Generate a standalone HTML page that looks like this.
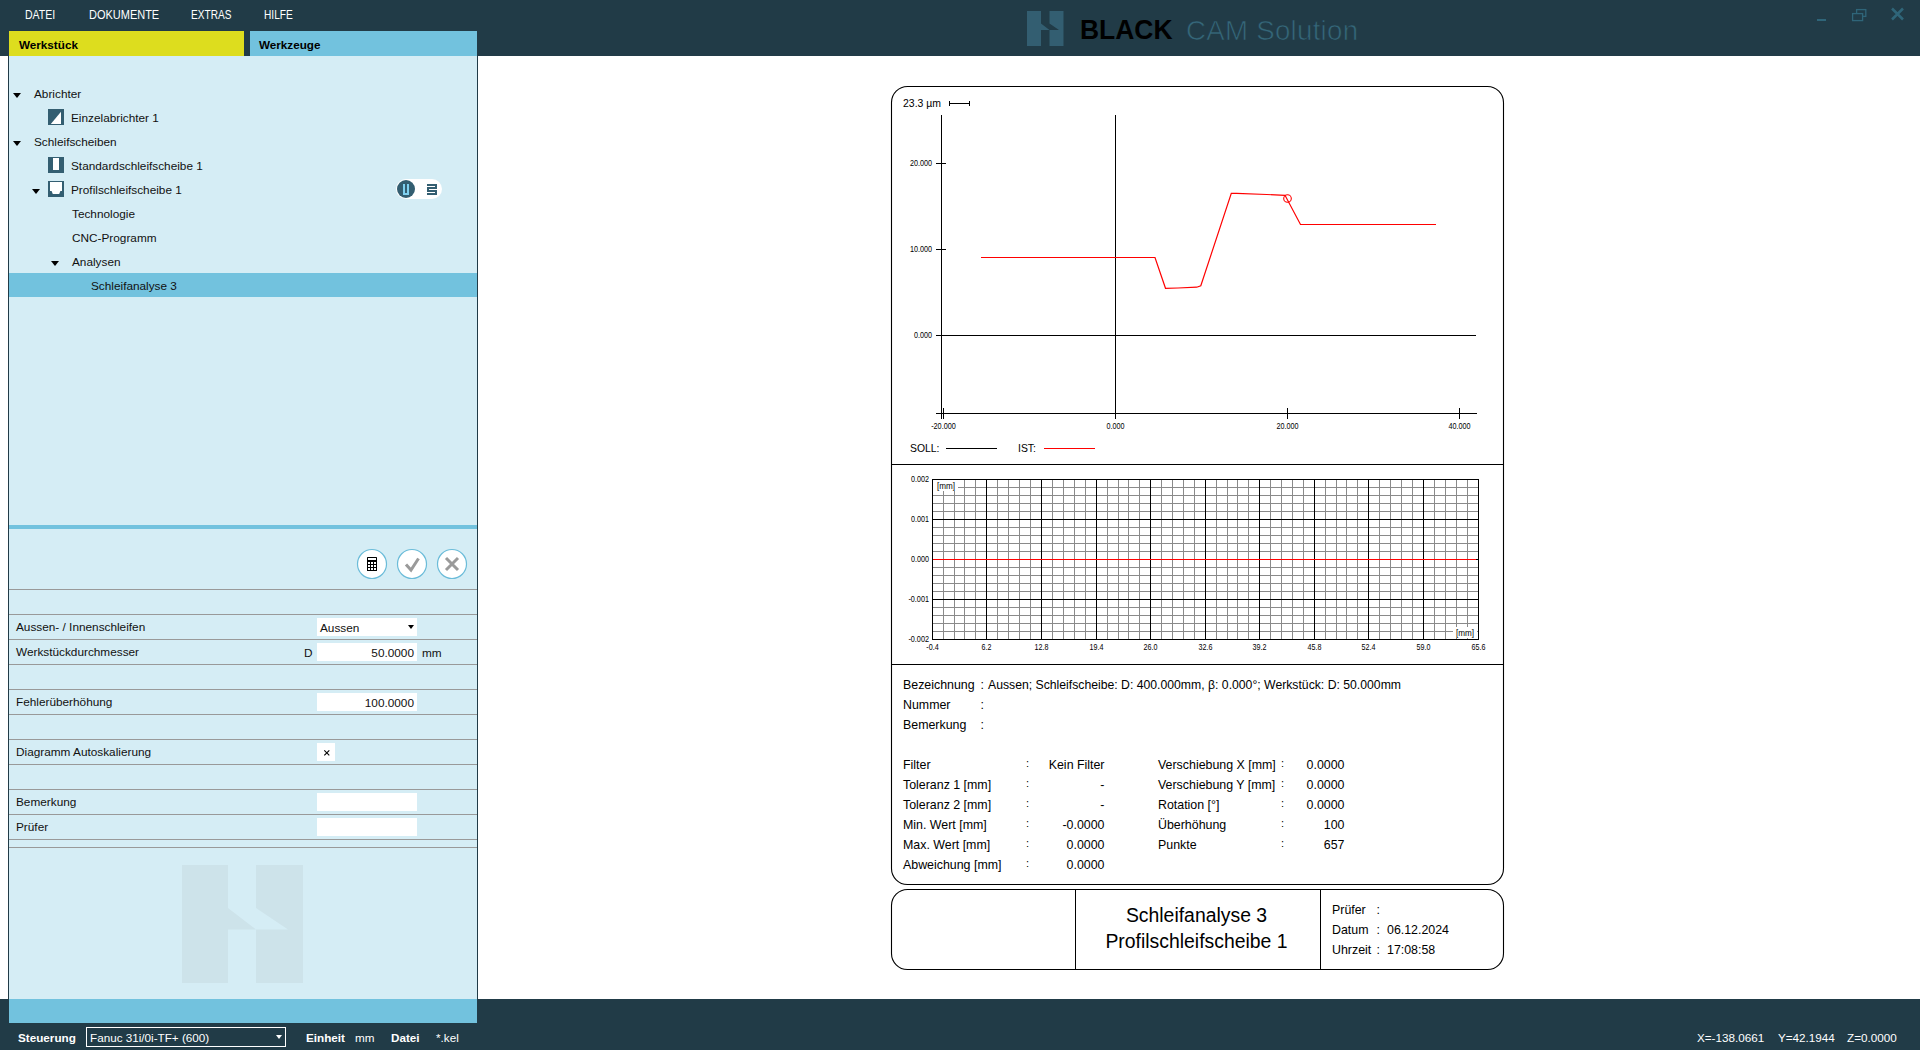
<!DOCTYPE html>
<html>
<head>
<meta charset="utf-8">
<style>
html,body{margin:0;padding:0;}
body{width:1920px;height:1050px;overflow:hidden;position:relative;background:#fff;font-family:"Liberation Sans",sans-serif;color:#000;}
.a{position:absolute;white-space:nowrap;}
.menu{top:8px;font-size:12px;color:#fff;line-height:14px;transform-origin:0 0;}
.tab{top:31px;height:25px;font-size:11.7px;font-weight:bold;line-height:27px;}
.tr{font-size:11.8px;line-height:14px;color:#111;}
.tri{width:0;height:0;border-left:4px solid transparent;border-right:4px solid transparent;border-top:5px solid #000;}
.hl{height:1px;background:#999999;left:9px;width:468px;}
.lbl{font-size:11.8px;line-height:14px;color:#111;left:16px;}
.fld{background:#fff;height:18px;width:100px;left:317px;font-size:11.8px;line-height:20px;text-align:right;box-sizing:border-box;padding-right:3px;color:#111;}
.st{font-size:11.7px;color:#fff;line-height:14px;top:1031px;}
</style>
</head>
<body>
<div class="a" style="left:0;top:0;width:1920px;height:56px;background:#213b47"></div>
<svg class="a" style="left:24px;top:5px" width="34.2" height="20"><text x="1" y="14.2" font-family="Liberation Sans" font-size="12.2" fill="#fff" textLength="30.2" lengthAdjust="spacingAndGlyphs">DATEI</text></svg>
<svg class="a" style="left:87.6px;top:5px" width="74.2" height="20"><text x="1" y="14.2" font-family="Liberation Sans" font-size="12.2" fill="#fff" textLength="70.2" lengthAdjust="spacingAndGlyphs">DOKUMENTE</text></svg>
<svg class="a" style="left:190.4px;top:5px" width="44.4" height="20"><text x="1" y="14.2" font-family="Liberation Sans" font-size="12.2" fill="#fff" textLength="40.4" lengthAdjust="spacingAndGlyphs">EXTRAS</text></svg>
<svg class="a" style="left:263.2px;top:5px" width="32.8" height="20"><text x="1" y="14.2" font-family="Liberation Sans" font-size="12.2" fill="#fff" textLength="28.8" lengthAdjust="spacingAndGlyphs">HILFE</text></svg>
<svg class="a" style="left:1027px;top:11px" width="37" height="35" viewBox="0 0 37 35"><path d="M0 0H14V12.5L22.5 19H14V35H0Z M22.5 0H36.5V35H22.5V19H32L22.5 12.5Z" fill="#335e71"/></svg>
<svg class="a" style="left:1078px;top:10px" width="100" height="36"><text x="2" y="29.4" font-family="Liberation Sans" font-weight="bold" font-size="27.5" textLength="92.5" lengthAdjust="spacingAndGlyphs">BLACK</text></svg>
<div class="a" style="left:1186px;top:15px;font-size:27.7px;line-height:32px;color:#35677a;-webkit-text-stroke:0.7px #213b47;letter-spacing:0.25px">CAM Solution</div>
<svg class="a" style="left:1800px;top:0px" width="120" height="30">
<rect x="17" y="19" width="9" height="2" fill="#2f6579"/>
<rect x="56.6" y="9.6" width="9.2" height="6.8" fill="none" stroke="#2f6579" stroke-width="1.3"/>
<rect x="52.6" y="13.6" width="10" height="7" fill="#213b47" stroke="#2f6579" stroke-width="1.3"/>
<path d="M92 8.5L103 19.5M103 8.5L92 19.5" stroke="#2f6579" stroke-width="2.5"/>
</svg>
<div class="a tab" style="left:9px;width:235px;background:#dddd1e;"><span style="margin-left:10px">Werkstück</span></div>
<div class="a tab" style="left:250px;width:227px;background:#72c2de;"><span style="margin-left:9px">Werkzeuge</span></div>
<div class="a" style="left:8px;top:56px;width:468px;height:943px;background:#d5edf5;border-left:1px solid #213b47;border-right:1px solid #213b47;"></div>
<div class="a" style="left:9px;top:273px;width:468px;height:24px;background:#72c2de"></div>
<div class="a tr" style="left:34px;top:87px">Abrichter</div>
<div class="a tr" style="left:71px;top:111px">Einzelabrichter 1</div>
<div class="a tr" style="left:34px;top:135px">Schleifscheiben</div>
<div class="a tr" style="left:71px;top:159px">Standardschleifscheibe 1</div>
<div class="a tr" style="left:71px;top:183px">Profilschleifscheibe 1</div>
<div class="a tr" style="left:72px;top:207px">Technologie</div>
<div class="a tr" style="left:72px;top:231px">CNC-Programm</div>
<div class="a tr" style="left:72px;top:255px">Analysen</div>
<div class="a tr" style="left:91px;top:279px">Schleifanalyse 3</div>
<div class="a tri" style="left:13px;top:93px"></div>
<div class="a tri" style="left:13px;top:141px"></div>
<div class="a tri" style="left:32px;top:189px"></div>
<div class="a tri" style="left:51px;top:261px"></div>
<svg class="a" style="left:48px;top:109px" width="16" height="16"><rect width="16" height="16" fill="#335e71"/><path d="M2.8 15L13 2.8V15Z" fill="#fff"/></svg>
<svg class="a" style="left:48px;top:157px" width="16" height="16"><rect width="16" height="16" fill="#335e71"/><rect x="5" y="1" width="6" height="12" fill="#fff"/></svg>
<svg class="a" style="left:48px;top:181px" width="16" height="16"><rect width="16" height="16" fill="#335e71"/><path d="M2 1H14V10H12.4L11.2 13H4.8L3.6 10H2Z" fill="#fff"/></svg>
<svg class="a" style="left:396px;top:179px" width="46" height="20"><rect x="0" y="0" width="46" height="20" rx="10" fill="#fff"/><circle cx="10" cy="10" r="9" fill="#335e71"/><path d="M7 5H9V14H11V5H13V16H7Z" fill="#7fd0ef"/><path d="M31 5h10v2h-10zM39 7h2v1h-2zM31 8h10v2h-10zM31 10h2v1h-2zM31 11h10v2h-10zM39 13h2v1h-2zM31 14h10v2h-10z" fill="#335e71"/></svg>
<div class="a" style="left:9px;top:525px;width:468px;height:4px;background:#72c2de"></div>
<svg class="a" style="left:350px;top:542px" width="120" height="44">
<circle cx="22" cy="22" r="14.5" fill="#fff" stroke="#6bbcd9" stroke-width="1.2"/>
<circle cx="62" cy="22" r="14.5" fill="#fff" stroke="#6bbcd9" stroke-width="1.2"/>
<circle cx="102" cy="22" r="14.5" fill="#fff" stroke="#6bbcd9" stroke-width="1.2"/>
<rect x="17" y="15" width="10" height="14" rx="0.6" fill="#000"/>
<rect x="18" y="16" width="8" height="2" fill="#fff"/><rect x="18" y="20" width="2" height="2" fill="#fff"/><rect x="18" y="23" width="2" height="2" fill="#fff"/><rect x="18" y="26" width="2" height="2" fill="#fff"/><rect x="21" y="20" width="2" height="2" fill="#fff"/><rect x="21" y="23" width="2" height="2" fill="#fff"/><rect x="21" y="26" width="2" height="2" fill="#fff"/><rect x="24" y="20" width="2" height="2" fill="#fff"/><rect x="24" y="23" width="2" height="2" fill="#fff"/><rect x="24" y="26" width="2" height="2" fill="#fff"/>
<path d="M56 22.5L61 28L68.5 16.5" fill="none" stroke="#9a9a9a" stroke-width="3"/>
<path d="M96 16L108 28M108 16L96 28" fill="none" stroke="#9a9a9a" stroke-width="3"/>
</svg>
<div class="a hl" style="top:589px"></div>
<div class="a hl" style="top:614px"></div>
<div class="a hl" style="top:639px"></div>
<div class="a hl" style="top:664px"></div>
<div class="a hl" style="top:689px"></div>
<div class="a hl" style="top:714px"></div>
<div class="a hl" style="top:739px"></div>
<div class="a hl" style="top:764px"></div>
<div class="a hl" style="top:789px"></div>
<div class="a hl" style="top:814px"></div>
<div class="a hl" style="top:839px"></div>
<div class="a hl" style="top:847px"></div>
<div class="a lbl" style="top:620px">Aussen- / Innenschleifen</div>
<div class="a lbl" style="top:645px">Werkstückdurchmesser</div>
<div class="a lbl" style="top:695px">Fehlerüberhöhung</div>
<div class="a lbl" style="top:745px">Diagramm Autoskalierung</div>
<div class="a lbl" style="top:795px">Bemerkung</div>
<div class="a lbl" style="top:820px">Prüfer</div>
<div class="a fld" style="top:618px;text-align:left;padding-left:3px">Aussen</div>
<div class="a tri" style="left:408px;top:625px;border-left-width:3.5px;border-right-width:3.5px;border-top-width:4px"></div>
<div class="a fld" style="top:643px">50.0000</div>
<div class="a lbl" style="left:304px;top:646px">D</div>
<div class="a lbl" style="left:422px;top:646px">mm</div>
<div class="a fld" style="top:693px">100.0000</div>
<svg class="a" style="left:317px;top:743px" width="18" height="18"><rect width="18" height="18" fill="#fff"/><path d="M7.3 7.3L12.3 12.3M12.3 7.3L7.3 12.3" stroke="#000" stroke-width="1.1"/></svg>
<div class="a fld" style="top:793px"></div>
<div class="a fld" style="top:818px"></div>
<svg class="a" style="left:182px;top:865px" width="121" height="118"><path d="M0 0H46V43L74 64.5H46V118H0Z M74 0H121V118H74V64.5H106L74 43Z" fill="#cde3ea"/></svg>
<svg class="a" style="left:0;top:0" width="1920" height="1050" viewBox="0 0 1920 1050">
<rect x="891.5" y="86.5" width="612" height="798" rx="16" fill="none" stroke="#000" stroke-width="1.1"/>
<path d="M891.5 464.5H1503.5M891.5 664.5H1503.5" stroke="#000" stroke-width="1" shape-rendering="crispEdges"/>
<text x="903" y="107" font-family="Liberation Sans" font-size="10.6" textLength="38" lengthAdjust="spacingAndGlyphs">23.3 µm</text>
<path d="M949.5 103.5H969.5M949.5 101V106M969.5 101V106" stroke="#000" stroke-width="1" shape-rendering="crispEdges"/>
<path d="M941.5 115V419M1115.5 115V419M936 413.5H1477M936 335.5H1476M936 163.5H946M936 249.5H946M943.5 408V419M1287.5 408V419M1459.5 408V419" stroke="#000" stroke-width="1" shape-rendering="crispEdges" fill="none"/>
<text x="932" y="166.0" font-family="Liberation Sans" font-size="8.4" text-anchor="end" textLength="22.1" lengthAdjust="spacingAndGlyphs">20.000</text>
<text x="932" y="252.0" font-family="Liberation Sans" font-size="8.4" text-anchor="end" textLength="22.1" lengthAdjust="spacingAndGlyphs">10.000</text>
<text x="932" y="338.0" font-family="Liberation Sans" font-size="8.4" text-anchor="end" textLength="18.0" lengthAdjust="spacingAndGlyphs">0.000</text>
<text x="943.5" y="429" font-family="Liberation Sans" font-size="8.4" text-anchor="middle" textLength="24.7" lengthAdjust="spacingAndGlyphs">-20.000</text>
<text x="1115.5" y="429" font-family="Liberation Sans" font-size="8.4" text-anchor="middle" textLength="18.0" lengthAdjust="spacingAndGlyphs">0.000</text>
<text x="1287.5" y="429" font-family="Liberation Sans" font-size="8.4" text-anchor="middle" textLength="22.1" lengthAdjust="spacingAndGlyphs">20.000</text>
<text x="1459.5" y="429" font-family="Liberation Sans" font-size="8.4" text-anchor="middle" textLength="22.1" lengthAdjust="spacingAndGlyphs">40.000</text>
<text x="910" y="452" font-family="Liberation Sans" font-size="10.4">SOLL:</text>
<path d="M946 448.5H997" stroke="#000" stroke-width="1" shape-rendering="crispEdges"/>
<text x="1018" y="452" font-family="Liberation Sans" font-size="10.4">IST:</text>
<path d="M1044 448.5H1095" stroke="#f00" stroke-width="1" shape-rendering="crispEdges"/>
<polyline points="981,257.5 1155,257.5 1165.5,288.3 1178,288 1196.7,287.2 1200.8,285.8 1231.3,193.3 1236.7,193.3 1266.7,194.5 1285,195.3 1300.5,224.5 1436,224.5" fill="none" stroke="#f00" stroke-width="1.2"/>
<circle cx="1287.5" cy="198.5" r="3.8" fill="none" stroke="#f00" stroke-width="1.1"/>
<path d="M943.5 479V639M954.5 479V639M964.5 479V639M975.5 479V639M997.5 479V639M1008.5 479V639M1019.5 479V639M1030.5 479V639M1052.5 479V639M1063.5 479V639M1074.5 479V639M1085.5 479V639M1107.5 479V639M1118.5 479V639M1128.5 479V639M1139.5 479V639M1161.5 479V639M1172.5 479V639M1183.5 479V639M1194.5 479V639M1216.5 479V639M1227.5 479V639M1237.5 479V639M1248.5 479V639M1270.5 479V639M1281.5 479V639M1292.5 479V639M1303.5 479V639M1325.5 479V639M1336.5 479V639M1346.5 479V639M1357.5 479V639M1379.5 479V639M1390.5 479V639M1401.5 479V639M1412.5 479V639M1434.5 479V639M1445.5 479V639M1456.5 479V639M1467.5 479V639M932 487.5H1479M932 495.5H1479M932 503.5H1479M932 511.5H1479M932 527.5H1479M932 535.5H1479M932 543.5H1479M932 551.5H1479M932 567.5H1479M932 575.5H1479M932 583.5H1479M932 591.5H1479M932 607.5H1479M932 615.5H1479M932 623.5H1479M932 631.5H1479" stroke="#8a8a8a" stroke-width="1" shape-rendering="crispEdges"/>
<path d="M932.5 479V640M986.5 479V640M1041.5 479V640M1096.5 479V640M1150.5 479V640M1205.5 479V640M1259.5 479V640M1314.5 479V640M1368.5 479V640M1423.5 479V640M1478.5 479V640M932 479.5H1479M932 519.5H1479M932 559.5H1479M932 599.5H1479M932 639.5H1479" stroke="#000" stroke-width="1" shape-rendering="crispEdges"/>
<path d="M933 559.5H1476" stroke="#f00" stroke-width="1" shape-rendering="crispEdges"/>
<rect x="933" y="480" width="25" height="11" fill="#fff"/>
<text x="937" y="489" font-family="Liberation Sans" font-size="8.4" textLength="18" lengthAdjust="spacingAndGlyphs">[mm]</text>
<rect x="1453" y="627" width="24" height="11" fill="#fff"/>
<text x="1456" y="635.5" font-family="Liberation Sans" font-size="8.4" textLength="18" lengthAdjust="spacingAndGlyphs">[mm]</text>
<text x="929" y="481.5" font-family="Liberation Sans" font-size="8.4" text-anchor="end" textLength="18.0" lengthAdjust="spacingAndGlyphs">0.002</text>
<text x="929" y="521.5" font-family="Liberation Sans" font-size="8.4" text-anchor="end" textLength="18.0" lengthAdjust="spacingAndGlyphs">0.001</text>
<text x="929" y="561.5" font-family="Liberation Sans" font-size="8.4" text-anchor="end" textLength="18.0" lengthAdjust="spacingAndGlyphs">0.000</text>
<text x="929" y="601.5" font-family="Liberation Sans" font-size="8.4" text-anchor="end" textLength="20.6" lengthAdjust="spacingAndGlyphs">-0.001</text>
<text x="929" y="641.5" font-family="Liberation Sans" font-size="8.4" text-anchor="end" textLength="20.6" lengthAdjust="spacingAndGlyphs">-0.002</text>
<text x="932.5" y="650" font-family="Liberation Sans" font-size="8.4" text-anchor="middle" textLength="12.4" lengthAdjust="spacingAndGlyphs">-0.4</text>
<text x="986.5" y="650" font-family="Liberation Sans" font-size="8.4" text-anchor="middle" textLength="9.8" lengthAdjust="spacingAndGlyphs">6.2</text>
<text x="1041.5" y="650" font-family="Liberation Sans" font-size="8.4" text-anchor="middle" textLength="13.9" lengthAdjust="spacingAndGlyphs">12.8</text>
<text x="1096.5" y="650" font-family="Liberation Sans" font-size="8.4" text-anchor="middle" textLength="13.9" lengthAdjust="spacingAndGlyphs">19.4</text>
<text x="1150.5" y="650" font-family="Liberation Sans" font-size="8.4" text-anchor="middle" textLength="13.9" lengthAdjust="spacingAndGlyphs">26.0</text>
<text x="1205.5" y="650" font-family="Liberation Sans" font-size="8.4" text-anchor="middle" textLength="13.9" lengthAdjust="spacingAndGlyphs">32.6</text>
<text x="1259.5" y="650" font-family="Liberation Sans" font-size="8.4" text-anchor="middle" textLength="13.9" lengthAdjust="spacingAndGlyphs">39.2</text>
<text x="1314.5" y="650" font-family="Liberation Sans" font-size="8.4" text-anchor="middle" textLength="13.9" lengthAdjust="spacingAndGlyphs">45.8</text>
<text x="1368.5" y="650" font-family="Liberation Sans" font-size="8.4" text-anchor="middle" textLength="13.9" lengthAdjust="spacingAndGlyphs">52.4</text>
<text x="1423.5" y="650" font-family="Liberation Sans" font-size="8.4" text-anchor="middle" textLength="13.9" lengthAdjust="spacingAndGlyphs">59.0</text>
<text x="1478.5" y="650" font-family="Liberation Sans" font-size="8.4" text-anchor="middle" textLength="13.9" lengthAdjust="spacingAndGlyphs">65.6</text>
<text x="903" y="689" font-family="Liberation Sans" font-size="12.4" text-anchor="start">Bezeichnung</text>
<text x="980.5" y="689" font-family="Liberation Sans" font-size="12.4" text-anchor="start">:</text>
<text x="988" y="689" font-family="Liberation Sans" font-size="12.4" textLength="413" lengthAdjust="spacingAndGlyphs">Aussen; Schleifscheibe: D: 400.000mm, β: 0.000°; Werkstück: D: 50.000mm</text>
<text x="903" y="709" font-family="Liberation Sans" font-size="12.4" text-anchor="start">Nummer</text>
<text x="980.5" y="709" font-family="Liberation Sans" font-size="12.4" text-anchor="start">:</text>
<text x="903" y="729" font-family="Liberation Sans" font-size="12.4" text-anchor="start">Bemerkung</text>
<text x="980.5" y="729" font-family="Liberation Sans" font-size="12.4" text-anchor="start">:</text>
<text x="903" y="768.5" font-family="Liberation Sans" font-size="12.4" text-anchor="start">Filter</text>
<text x="1026" y="766.5" font-family="Liberation Sans" font-size="11" text-anchor="start">:</text>
<text x="1104.5" y="768.5" font-family="Liberation Sans" font-size="12.4" text-anchor="end">Kein Filter</text>
<text x="903" y="788.5" font-family="Liberation Sans" font-size="12.4" text-anchor="start">Toleranz 1 [mm]</text>
<text x="1026" y="786.5" font-family="Liberation Sans" font-size="11" text-anchor="start">:</text>
<text x="1104.5" y="788.5" font-family="Liberation Sans" font-size="12.4" text-anchor="end">-</text>
<text x="903" y="808.5" font-family="Liberation Sans" font-size="12.4" text-anchor="start">Toleranz 2 [mm]</text>
<text x="1026" y="806.5" font-family="Liberation Sans" font-size="11" text-anchor="start">:</text>
<text x="1104.5" y="808.5" font-family="Liberation Sans" font-size="12.4" text-anchor="end">-</text>
<text x="903" y="828.5" font-family="Liberation Sans" font-size="12.4" text-anchor="start">Min. Wert [mm]</text>
<text x="1026" y="826.5" font-family="Liberation Sans" font-size="11" text-anchor="start">:</text>
<text x="1104.5" y="828.5" font-family="Liberation Sans" font-size="12.4" text-anchor="end">-0.0000</text>
<text x="903" y="848.5" font-family="Liberation Sans" font-size="12.4" text-anchor="start">Max. Wert [mm]</text>
<text x="1026" y="846.5" font-family="Liberation Sans" font-size="11" text-anchor="start">:</text>
<text x="1104.5" y="848.5" font-family="Liberation Sans" font-size="12.4" text-anchor="end">0.0000</text>
<text x="903" y="868.5" font-family="Liberation Sans" font-size="12.4" text-anchor="start">Abweichung [mm]</text>
<text x="1026" y="866.5" font-family="Liberation Sans" font-size="11" text-anchor="start">:</text>
<text x="1104.5" y="868.5" font-family="Liberation Sans" font-size="12.4" text-anchor="end">0.0000</text>
<text x="1158" y="768.5" font-family="Liberation Sans" font-size="12.4" text-anchor="start">Verschiebung X [mm]</text>
<text x="1281" y="766.5" font-family="Liberation Sans" font-size="11" text-anchor="start">:</text>
<text x="1344.5" y="768.5" font-family="Liberation Sans" font-size="12.4" text-anchor="end">0.0000</text>
<text x="1158" y="788.5" font-family="Liberation Sans" font-size="12.4" text-anchor="start">Verschiebung Y [mm]</text>
<text x="1281" y="786.5" font-family="Liberation Sans" font-size="11" text-anchor="start">:</text>
<text x="1344.5" y="788.5" font-family="Liberation Sans" font-size="12.4" text-anchor="end">0.0000</text>
<text x="1158" y="808.5" font-family="Liberation Sans" font-size="12.4" text-anchor="start">Rotation [°]</text>
<text x="1281" y="806.5" font-family="Liberation Sans" font-size="11" text-anchor="start">:</text>
<text x="1344.5" y="808.5" font-family="Liberation Sans" font-size="12.4" text-anchor="end">0.0000</text>
<text x="1158" y="828.5" font-family="Liberation Sans" font-size="12.4" text-anchor="start">Überhöhung</text>
<text x="1281" y="826.5" font-family="Liberation Sans" font-size="11" text-anchor="start">:</text>
<text x="1344.5" y="828.5" font-family="Liberation Sans" font-size="12.4" text-anchor="end">100</text>
<text x="1158" y="848.5" font-family="Liberation Sans" font-size="12.4" text-anchor="start">Punkte</text>
<text x="1281" y="846.5" font-family="Liberation Sans" font-size="11" text-anchor="start">:</text>
<text x="1344.5" y="848.5" font-family="Liberation Sans" font-size="12.4" text-anchor="end">657</text>
<rect x="891.5" y="889.5" width="612" height="80" rx="16" fill="none" stroke="#000" stroke-width="1.1"/>
<path d="M1075.5 889.5V969.5M1320.5 889.5V969.5" stroke="#000" stroke-width="1" shape-rendering="crispEdges"/>
<text x="1196.5" y="921.5" font-family="Liberation Sans" font-size="19.4" text-anchor="middle">Schleifanalyse 3</text>
<text x="1196.5" y="947.5" font-family="Liberation Sans" font-size="19.4" text-anchor="middle">Profilschleifscheibe 1</text>
<text x="1332" y="914" font-family="Liberation Sans" font-size="12.4" text-anchor="start">Prüfer</text>
<text x="1376.5" y="914" font-family="Liberation Sans" font-size="12.4" text-anchor="start">:</text>
<text x="1332" y="934" font-family="Liberation Sans" font-size="12.4" text-anchor="start">Datum</text>
<text x="1376.5" y="934" font-family="Liberation Sans" font-size="12.4" text-anchor="start">:</text>
<text x="1387" y="934" font-family="Liberation Sans" font-size="12.4" text-anchor="start">06.12.2024</text>
<text x="1332" y="954" font-family="Liberation Sans" font-size="12.4" text-anchor="start">Uhrzeit</text>
<text x="1376.5" y="954" font-family="Liberation Sans" font-size="12.4" text-anchor="start">:</text>
<text x="1387" y="954" font-family="Liberation Sans" font-size="12.4" text-anchor="start">17:08:58</text>
</svg>
<div class="a" style="left:0;top:999px;width:1920px;height:51px;background:#213b47"></div>
<div class="a" style="left:9px;top:999px;width:468px;height:24px;background:#72c2de"></div>
<div class="a st" style="left:18px;font-weight:bold">Steuerung</div>
<div class="a" style="left:86px;top:1027px;width:198px;height:18px;border:1px solid #fff;"></div>
<div class="a st" style="left:90px">Fanuc 31i/0i-TF+ (600)</div>
<div class="a tri" style="left:276px;top:1035px;border-left-width:3.5px;border-right-width:3.5px;border-top:4px solid #fff"></div>
<div class="a st" style="left:306px;font-weight:bold">Einheit</div>
<div class="a st" style="left:355px">mm</div>
<div class="a st" style="left:391px;font-weight:bold">Datei</div>
<div class="a st" style="left:436px">*.kel</div>
<div class="a st" style="left:1697px">X=-138.0661</div>
<div class="a st" style="left:1778px">Y=42.1944</div>
<div class="a st" style="left:1847px">Z=0.0000</div>
</body>
</html>
